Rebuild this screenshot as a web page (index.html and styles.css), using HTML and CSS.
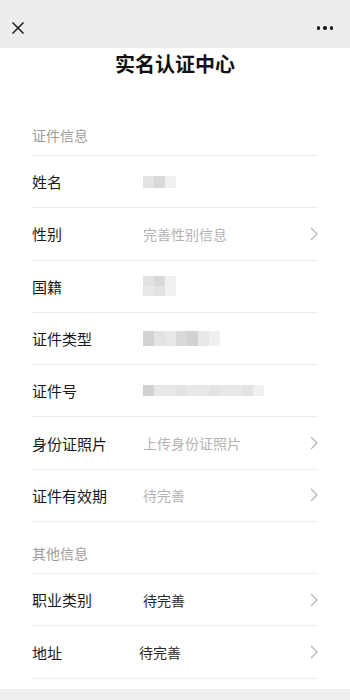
FILE: index.html
```html
<!DOCTYPE html>
<html lang="zh-CN">
<head>
    <meta charset="UTF-8">
    <meta name="viewport" content="width=device-width, initial-scale=1.0">
    <title>实名认证中心</title>
    <link rel="stylesheet" href="styles.css">
</head>
<body>
    <nav class="topbar">
        <svg class="close-icon" width="12" height="12" viewBox="0 0 12 12">
            <path d="M0.5 0.5 L11.5 11.5 M11.5 0.5 L0.5 11.5" />
        </svg>
        <div class="more">
            <span></span><span></span><span></span>
        </div>
    </nav>

    <main class="page">
        <h1 class="page-title">实名认证中心</h1>

        <section class="group">
            <div class="group-title">证件信息</div>
            <div class="row">
                <span class="label">姓名</span>
                <span class="mosaic">
                    <i class="c3"></i><i class="c2"></i><i class="c5"></i>
                </span>
            </div>
            <div class="row">
                <span class="label">性别</span>
                <span class="value">完善性别信息</span>
                <svg class="arrow" width="8" height="14" viewBox="0 0 8 14"><polyline points="1,1 7,7 1,13" /></svg>
            </div>
            <div class="row">
                <span class="label">国籍</span>
                <span class="mosaic mosaic-tall">
                    <span class="mosaic-line"><i class="c3"></i><i class="c2"></i><i class="c5"></i></span>
                    <span class="mosaic-line"><i class="c4"></i><i class="c3"></i><i class="c5"></i></span>
                </span>
            </div>
            <div class="row">
                <span class="label">证件类型</span>
                <span class="mosaic mosaic-wide">
                    <i class="c1"></i><i class="c3"></i><i class="c4"></i><i class="c2"></i><i class="c1"></i><i class="c4"></i><i class="c5"></i>
                </span>
            </div>
            <div class="row">
                <span class="label">证件号</span>
                <span class="mosaic mosaic-thin">
                    <i class="c1"></i><i class="c4"></i><i class="c4"></i><i class="c3"></i><i class="c4"></i><i class="c4"></i><i class="c3"></i><i class="c4"></i><i class="c4"></i><i class="c3"></i><i class="c5"></i>
                </span>
            </div>
            <div class="row">
                <span class="label">身份证照片</span>
                <span class="value">上传身份证照片</span>
                <svg class="arrow" width="8" height="14" viewBox="0 0 8 14"><polyline points="1,1 7,7 1,13" /></svg>
            </div>
            <div class="row">
                <span class="label">证件有效期</span>
                <span class="value">待完善</span>
                <svg class="arrow" width="8" height="14" viewBox="0 0 8 14"><polyline points="1,1 7,7 1,13" /></svg>
            </div>
        </section>

        <section class="group">
            <div class="group-title group-title-second">其他信息</div>
            <div class="row">
                <span class="label">职业类别</span>
                <span class="value value-dark">待完善</span>
                <svg class="arrow" width="8" height="14" viewBox="0 0 8 14"><polyline points="1,1 7,7 1,13" /></svg>
            </div>
            <div class="row">
                <span class="label">地址</span>
                <span class="value value-dark value-shift">待完善</span>
                <svg class="arrow" width="8" height="14" viewBox="0 0 8 14"><polyline points="1,1 7,7 1,13" /></svg>
            </div>
        </section>
    </main>
</body>
</html>
```

FILE: styles.css
```css
body {
    font-family: "Noto Sans CJK SC", "Noto Sans", sans-serif;
    margin: 0;
    padding: 0;
    background-color: #efefef;
    min-height: 700px;
    color: #1a1a1a;
}

.topbar {
    height: 48px;
    box-sizing: border-box;
    padding: 8px 17px 0 12px;
    background-color: #ededed;
    display: flex;
    align-items: center;
    justify-content: space-between;
}

.close-icon path {
    stroke: #1c1c1c;
    stroke-width: 1.5;
    fill: none;
}

.more {
    display: flex;
    gap: 3px;
}

.more span {
    width: 3.5px;
    height: 3.5px;
    border-radius: 50%;
    background-color: #1c1c1c;
}

.page {
    background-color: #fff;
    padding: 1px 32px 10px;
}

.page-title {
    margin: 0;
    font-size: 20px;
    line-height: 30px;
    font-weight: bold;
    text-align: center;
    color: #111;
}

.group-title {
    font-size: 14px;
    line-height: 20px;
    color: #9c9c9c;
    padding: 46px 0 10px;
    border-bottom: 1px solid #ececec;
}

.group-title-second {
    padding: 21px 0 10px;
}

.row {
    height: 52.3px;
    box-sizing: border-box;
    display: flex;
    align-items: center;
    border-bottom: 1px solid #ececec;
}

.label {
    width: 111px;
    flex-shrink: 0;
    font-size: 15px;
    color: #1a1a1a;
}

.value {
    flex: 1;
    font-size: 14px;
    color: #b3b3b3;
}

.value-dark {
    color: #2a2a2a;
}

.value-shift {
    margin-left: -4px;
}

.arrow {
    flex-shrink: 0;
}

.arrow polyline {
    fill: none;
    stroke: #b9b9b9;
    stroke-width: 1.4;
}

/* pixelated blur over private data */
.mosaic {
    display: flex;
    height: 12px;
}

.mosaic i {
    width: 11px;
    height: 100%;
}

.mosaic-tall {
    flex-direction: column;
    height: 20px;
}

.mosaic-line {
    display: flex;
    height: 10px;
}

.mosaic-wide {
    height: 15px;
}

.mosaic-thin {
    height: 11px;
}

.c1 { background-color: #d2d2d2; }
.c2 { background-color: #d9d9d9; }
.c3 { background-color: #e3e3e3; }
.c4 { background-color: #e8e8e8; }
.c5 { background-color: #f0f0f0; }
```
